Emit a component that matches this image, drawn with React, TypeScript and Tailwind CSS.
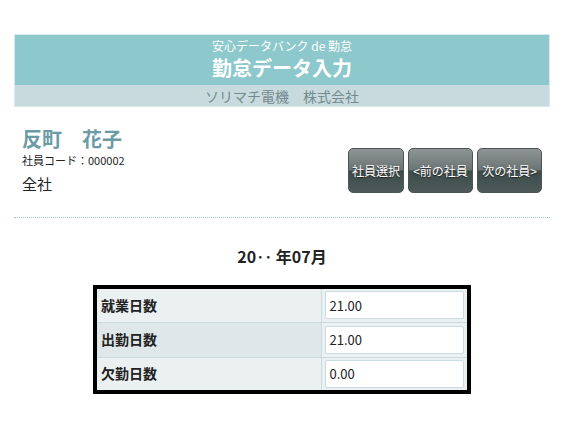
import React from "react";

const jp = { fontFamily: '"Noto Sans CJK JP", "Noto Sans", sans-serif' };

const rows = [
  { label: "就業日数", value: "21.00", bg: "bg-[#ebf0f0]" },
  { label: "出勤日数", value: "21.00", bg: "bg-[#e0e7e9]" },
  { label: "欠勤日数", value: "0.00", bg: "bg-[#ebf0f0]" },
];

function NavButton({ label, width }: { label: string; width: string }) {
  return (
    <button
      className={`${width} h-[45px] rounded-[5px] border border-[#4b5555] bg-[linear-gradient(to_bottom,#8f9595_0%,#6b7474_48%,#3c4a4a_52%,#4f5b5b_100%)] text-white text-[12px] [text-shadow:0_1px_1px_#222] flex items-center justify-center`}
    >
      {label}
    </button>
  );
}

export default function App() {
  return (
    <div className="min-h-[425px] bg-white text-[#222] pl-[14px] pr-[17px] pt-[34px]" style={jp}>
      <div className="border border-[#d8eaec]">
        <div className="h-[50px] bg-[#8cc8cc] flex flex-col items-center justify-center pb-[3px] text-white">
          <div className="text-[12px] leading-[17px]">安心データバンク de 勤怠</div>
          <div className="text-[20px] font-bold leading-[27px]">勤怠データ入力</div>
        </div>
        <div className="h-[21px] bg-[#c8dadd] flex items-center justify-center text-[14px] leading-[20px] text-[#738a90]">
          ソリマチ電機　株式会社
        </div>
      </div>

      <div className="flex justify-between items-start pt-[18px] px-[8px]">
        <div>
          <div className="text-[20px] font-bold leading-[28px] text-[#6a9aa4]">反町　花子</div>
          <div className="text-[11px] leading-[15px]">社員コード：000002</div>
          <div className="text-[15px] leading-[22px] mt-[5px]">全社</div>
        </div>
        <div className="flex gap-[4px] mt-[23px]">
          <NavButton label="社員選択" width="w-[56px]" />
          <NavButton label="<前の社員" width="w-[65px]" />
          <NavButton label="次の社員>" width="w-[65px]" />
        </div>
      </div>

      <div className="mt-[22px] border-t border-dotted border-[#9cc4c8]" />

      <div className="mt-[27px] text-center text-[16px] font-bold leading-[22px]">20‥ 年07月</div>

      <div className="flex justify-center mt-[18px]">
        <table className="w-[378px] border-4 border-black border-collapse">
          <tbody>
            {rows.map((r) => (
              <tr key={r.label} className="h-[35px]">
                <td className={`${r.bg} w-[226px] border border-[#c9dcdf] px-[4px] text-[14px] font-bold`}>
                  {r.label}
                </td>
                <td className="bg-[#ebf0f0] border border-[#c9dcdf] px-[3px]">
                  <div className="h-[28px] bg-white border border-[#c9dcdf] rounded-[2px] flex items-center px-[4px] text-[13px] text-[#222]">
                    {r.value}
                  </div>
                </td>
              </tr>
            ))}
          </tbody>
        </table>
      </div>
    </div>
  );
}
